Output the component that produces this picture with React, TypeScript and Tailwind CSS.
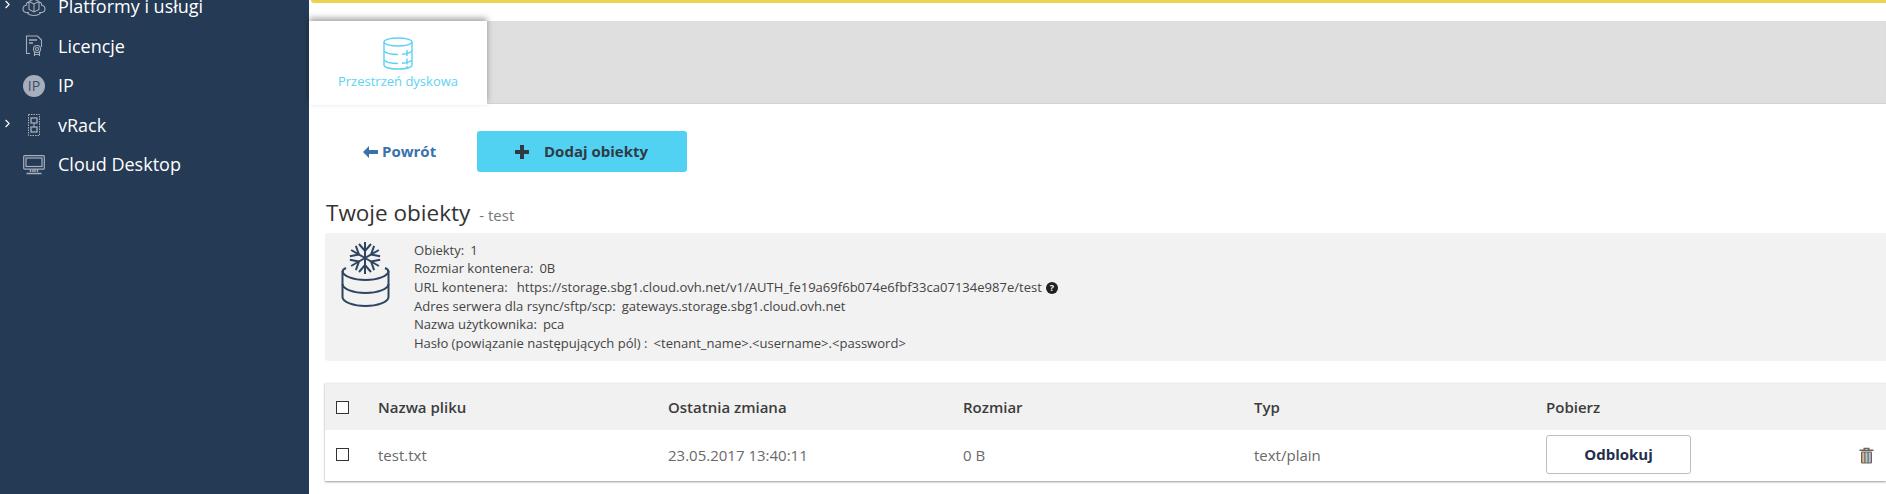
import React from "react";
import { ChevronRight } from "lucide-react";

const stroke = "#a7b0bd";

function PlatformIcon() {
  return (
    <svg width="24" height="20" viewBox="0 0 24 20" fill="none" stroke={stroke} strokeWidth="1.1">
      <path d="M7 4.5 12 2l5 2.5v8L12 15l-5-2.500z" />
      <path d="M7 4.500 12 7l5-2.500M12 7v8" />
      <path d="M7 5.500C5 5 4 6.500 4.500 8 2.500 8.500 1 10 1 12c0 2.200 2 3.500 4 3.500h2M17 5.500c2-.5 3 1 2.500 2.500 2 .5 3.500 2 3.500 4 0 2.200-2 3.500-4 3.500h-2" />
      <path d="M5 15.500c1.500 2 4 3 7 3s5.500-1 7-3" />
    </svg>
  );
}
function LicenseIcon() {
  return (
    <svg width="20" height="22" viewBox="0 0 20 22" fill="none" stroke={stroke} strokeWidth="1.1">
      <path d="M6 18.500H2.500V1h11l4 4v7" />
      <path d="M5 5h8M5 8h4" strokeWidth="1.500" />
      <circle cx="13" cy="14" r="3.500" />
      <circle cx="13" cy="14" r="1.500" />
      <path d="M10.500 17v4M15.500 17v4M10.500 19.500h5" />
    </svg>
  );
}
function IpIcon() {
  return (
    <div className="flex h-[22px] w-[22px] items-center justify-center rounded-full bg-[#a7aebb] text-[14px] font-normal text-[#3d4f68]">
      IP
    </div>
  );
}
function RackIcon() {
  return (
    <svg width="14" height="22" viewBox="0 0 14 22" fill="none" stroke={stroke} strokeWidth="1">
      <rect x="1.500" y="0.500" width="11" height="21" strokeDasharray="1.500 1" />
      <rect x="4" y="4" width="6" height="5" strokeWidth="1.300" />
      <rect x="4" y="13" width="6" height="5" strokeWidth="1.300" />
      <path d="M7 9v4" />
    </svg>
  );
}
function DesktopIcon() {
  return (
    <svg width="22" height="20" viewBox="0 0 22 20" fill="none" stroke={stroke} strokeWidth="1.200">
      <rect x="0.700" y="0.700" width="20.600" height="13.500" rx="1" />
      <rect x="3" y="3" width="16" height="8.500" />
      <path d="M7.500 14.500v2.500M14.500 14.500v2.500M10 14.500v2.500M12 14.500v2.500M3.500 18.500h15" strokeWidth="1.500" />
    </svg>
  );
}

function NavItem({ icon, label, chevron }: { icon: React.ReactNode; label: string; chevron?: boolean }) {
  return (
    <div className="flex h-[39.5px] items-center text-[18px] text-white">
      <div className="flex w-[22px] justify-start pl-[1px]">
        {chevron && <ChevronRight size={13} strokeWidth={2} color="#ffffff" className="-mt-[4px]" />}
      </div>
      <div className="flex w-[24px] justify-center">{icon}</div>
      <span className="ml-[12px] -mt-[1px] leading-none">{label}</span>
    </div>
  );
}

function Sidebar() {
  return (
    <aside className="w-[309px] shrink-0 overflow-hidden bg-[#253a55]">
      <div className="-mt-[13px]">
        <NavItem chevron icon={<PlatformIcon />} label="Platformy i usługi" />
        <NavItem icon={<LicenseIcon />} label="Licencje" />
        <NavItem icon={<IpIcon />} label="IP" />
        <NavItem chevron icon={<RackIcon />} label="vRack" />
        <NavItem icon={<DesktopIcon />} label="Cloud Desktop" />
      </div>
    </aside>
  );
}

function DiskIcon() {
  return (
    <svg width="30" height="33" viewBox="0 0 30 33" fill="none" stroke="#5ed2f2" strokeWidth="1.400">
      <ellipse cx="15" cy="5" rx="14" ry="4" />
      <path d="M1 5v23c0 2.500 6.500 4 14 4s14-1.500 14-4V5" />
      <path d="M1 14c2 2.200 7 3.500 14 3.500M19 17.300c4-.3 8-1.300 10-3.300M24 13v6" />
      <path d="M1 23c2 2.200 7 3.500 14 3.500M19 26.300c4-.3 8-1.300 10-3.300M24 21.500v6M24 29v3" />
    </svg>
  );
}

function SnowDisk() {
  const arms = [0, 60, 120, 180, 240, 300];
  return (
    <svg width="50" height="66" viewBox="0 0 50 66" fill="none" stroke="#2e4460" strokeWidth="2">
      {arms.map((a) => (
        <g key={a} transform={`rotate(${a} 24 16)`}>
          <path d="M24 16V0" />
          <path d="M18 2l6 7 6-7" />
        </g>
      ))}
      <path d="M5 26c-2.500 1-3.500 2-3.500 4v25c0 5 11 9 23 9s23-4 23-9V30c0-2-1-3-3.500-4" />
      <path d="M1.500 29c0 5 11 9 23 9s23-4 23-9" />
      <path d="M1.500 42c0 5 11 9 23 9s23-4 23-9" />
    </svg>
  );
}

function TrashIcon() {
  return (
    <svg width="15" height="17" viewBox="0 0 15 17">
      <path d="M4.500 2.500V.700h6v1.800h4v1.500H.500V2.500zM6 2.500h3v-.6H6z" fill="#6b625c" />
      <rect x="2" y="4.500" width="11" height="12" rx="1" fill="#6b625c" />
      <rect x="3.300" y="5.500" width="2" height="10" fill="#e6b48e" />
      <rect x="6.500" y="5.500" width="2" height="10" fill="#a5d4cb" />
      <rect x="9.700" y="5.500" width="2" height="10" fill="#bcc4dc" />
    </svg>
  );
}

function InfoLine({ label, value, gap, extra }: { label: string; value: string; gap: string; extra?: React.ReactNode }) {
  return (
    <div className="flex h-[18.700px] items-center whitespace-pre">
      <span>{label}</span>
      <span className={gap}>{value}</span>
      {extra}
    </div>
  );
}

function Checkbox() {
  return <div className="h-[13px] w-[13px] border border-[#333333] bg-white" />;
}

const gridCols = "grid grid-cols-[53px_290px_295px_291px_292px_1fr] items-center";

export default function App() {
  return (
    <div
      className="flex h-[494px] w-[1886px] overflow-hidden bg-white text-[#555555]"
      style={{ fontFamily: '"Open Sans", "Noto Sans", sans-serif' }}
    >
      <Sidebar />
      <main className="flex min-w-0 flex-1 flex-col">
        <div className="ml-[2px] h-[3px] shrink-0 rounded-bl-[6px] bg-[#ecd34f]" />
        <div className="mt-[18px] flex h-[83px] shrink-0 bg-[#dfdfdf] shadow-[inset_0_-1px_1px_rgba(0,0,0,0.06)]">
          <div className="flex h-[84px] w-[178px] flex-col items-center bg-white pt-[16px] shadow-[0_-3px_6px_rgba(0,0,0,0.35)]">
            <DiskIcon />
            <span className="mt-[3px] text-[13px] leading-[17px] text-[#5ed2f2]">Przestrzeń dyskowa</span>
          </div>
        </div>

        <div className="mt-[27px] flex h-[41px] shrink-0 items-center pl-[54px]">
          <a className="flex w-[114px] items-center gap-[4px] text-[15px] font-bold text-[#3a72ad]">
            <svg width="15" height="12" viewBox="0 0 15 12" fill="#3a72ad">
              <path d="M0 6 6 0v4h9v4H6v4z" />
            </svg>
            Powrót
          </a>
          <button className="flex h-[41px] w-[210px] items-center rounded-[3px] bg-[#52d2f3] pl-[38px] text-[15px] font-bold text-[#2f3a45]">
            <svg width="14" height="14" viewBox="0 0 14 14" fill="#2f3a45">
              <path d="M5 0h4v5h5v4H9v5H5V9H0V5h5z" />
            </svg>
            <span className="ml-[15px]">Dodaj obiekty</span>
          </button>
        </div>

        <div className="ml-[17px] mt-[23px] flex h-[36px] shrink-0 items-baseline">
          <h1 className="text-[22.500px] font-normal leading-[36px] text-[#333333]">Twoje obiekty</h1>
          <span className="ml-[9px] text-[15px] text-[#777777]">- test</span>
        </div>

        <section className="ml-[16px] mt-[2px] flex h-[128px] shrink-0 rounded-l-[3px] bg-[#f2f2f2] pl-[16px] text-[13.050px] text-[#444444]">
          <div className="mt-[9px] w-[73px] shrink-0">
            <SnowDisk />
          </div>
          <div className="pt-[8px]">
            <InfoLine label="Obiekty:" value="1" gap="ml-[6px]" />
            <InfoLine label="Rozmiar kontenera:" value="0B" gap="ml-[6px]" />
            <InfoLine
              label="URL kontenera:"
              value="https://storage.sbg1.cloud.ovh.net/v1/AUTH_fe19a69f6b074e6fbf33ca07134e987e/test"
              gap="ml-[9px]"
              extra={
                <span className="ml-[4px] flex h-[12px] w-[12px] items-center justify-center rounded-full bg-[#222222] text-[9px] font-bold leading-none text-white">
                  ?
                </span>
              }
            />
            <InfoLine label="Adres serwera dla rsync/sftp/scp:" value="gateways.storage.sbg1.cloud.ovh.net" gap="ml-[6px]" />
            <InfoLine label="Nazwa użytkownika:" value="pca" gap="ml-[6px]" />
            <InfoLine label="Hasło (powiązanie następujących pól) :" value="<tenant_name>.<username>.<password>" gap="ml-[6px]" />
          </div>
        </section>

        <section className="ml-[16px] mt-[22px] shrink-0 border-t border-[#ececec] shadow-[0_1px_2px_rgba(0,0,0,0.4)]">
          <div className={`${gridCols} h-[46px] bg-[#f1f1f1] text-[15px] font-semibold text-[#3c3c3c]`}>
            <div className="pl-[11px]">
              <Checkbox />
            </div>
            <span>Nazwa pliku</span>
            <span>Ostatnia zmiana</span>
            <span>Rozmiar</span>
            <span>Typ</span>
            <span>Pobierz</span>
          </div>
          <div className={`${gridCols} h-[51px] bg-white text-[15px] text-[#6a6a6a]`}>
            <div className="-mt-[3px] pl-[11px]">
              <Checkbox />
            </div>
            <span>test.txt</span>
            <span>23.05.2017 13:40:11</span>
            <span>0 B</span>
            <span>text/plain</span>
            <div className="flex items-center justify-between pr-[12px]">
              <button className="mb-[2px] h-[39px] w-[145px] rounded-[3px] border border-[#bdbdbd] bg-white text-[15px] font-bold text-[#1f2f4a]">
                Odblokuj
              </button>
              <TrashIcon />
            </div>
          </div>
        </section>
      </main>
    </div>
  );
}
